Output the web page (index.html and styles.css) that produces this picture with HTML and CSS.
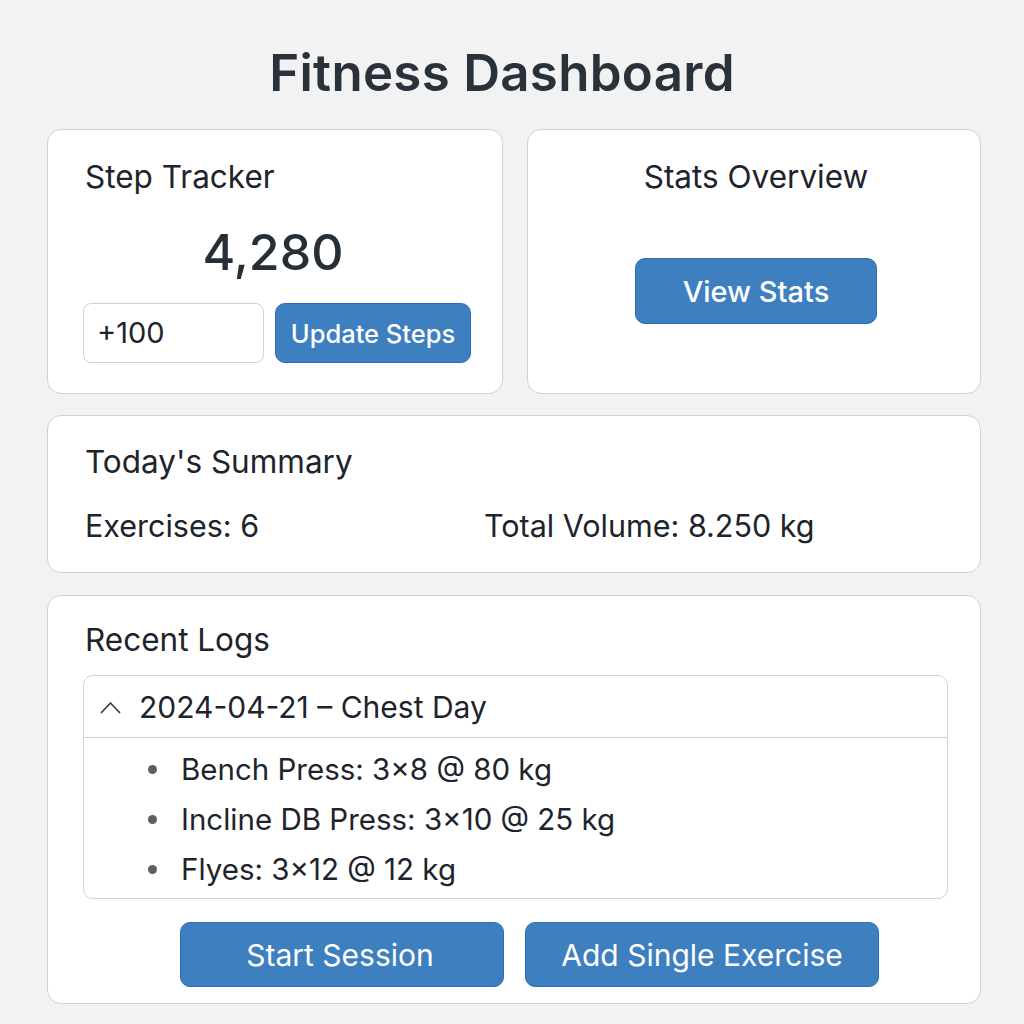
FILE: index.html
```html
<!DOCTYPE html>
<html lang="en">
<head>
<meta charset="utf-8">
<title>Fitness Dashboard</title>
<link rel="stylesheet" href="styles.css">
</head>
<body>
<main class="page">
  <h1 class="title">Fitness Dashboard</h1>
  <div class="top-row">
    <section class="card step-card">
      <h2 class="card-title">Step Tracker</h2>
      <div class="step-count">4,280</div>
      <div class="step-form">
        <div class="step-input">+100</div>
        <button class="btn btn-sm">Update Steps</button>
      </div>
    </section>
    <section class="card stats-card">
      <h2 class="card-title">Stats Overview</h2>
      <button class="btn btn-stats">View Stats</button>
    </section>
  </div>
  <section class="card summary-card">
    <h2 class="card-title">Today's Summary</h2>
    <div class="summary-grid">
      <span>Exercises: 6</span>
      <span>Total Volume: 8.250 kg</span>
    </div>
  </section>
  <section class="card logs-card">
    <h2 class="card-title">Recent Logs</h2>
    <div class="log">
      <div class="log-head">
        <svg class="chev" width="21" height="13" viewBox="0 0 21 13"><path d="M1.5 11.5 L10.5 2 L19.5 11.5" fill="none" stroke="#3d434a" stroke-width="1.8" stroke-linecap="round" stroke-linejoin="round"/></svg>
        <span>2024-04-21 – Chest Day</span>
      </div>
      <ul class="log-list">
        <li>Bench Press: 3×8 @ 80 kg</li>
        <li>Incline DB Press: 3×10 @ 25 kg</li>
        <li>Flyes: 3×12 @ 12 kg</li>
      </ul>
    </div>
    <div class="actions">
      <button class="btn btn-lg btn-start">Start Session</button>
      <button class="btn btn-lg btn-add">Add Single Exercise</button>
    </div>
  </section>
</main>
</body>
</html>
```
FILE: styles.css
```css
* { box-sizing: border-box; }
body {
  margin: 0;
  background: #f2f2f2;
  font-family: Inter, "Noto Sans", "Liberation Sans", sans-serif;
  color: #1d242c;
}
.page {
  width: 934px;
  margin-left: 47px;
  padding-top: 45px;
}
.title {
  margin: 0;
  padding-right: 24px;
  text-align: center;
  font-size: 51px;
  line-height: 56px;
  font-weight: 600;
  color: #29323b;
  letter-spacing: 0.3px;
}
.top-row {
  margin-top: 28px;
  display: grid;
  grid-template-columns: 456px 454px;
  gap: 24px;
  height: 265px;
}
.card {
  background: #fff;
  border: 1px solid #cfd2d5;
  border-radius: 14px;
}
.card-title {
  margin: 0;
  font-size: 31.5px;
  line-height: 36px;
  font-weight: 400;
  color: #1d242c;
}
.step-card {
  padding: 29px 31px 0 35px;
}
.step-card .card-title { padding-left: 2px; }
.step-count {
  margin-top: 29px;
  text-align: center;
  font-size: 50px;
  line-height: 56px;
  font-weight: 500;
  color: #262e36;
  padding-right: 8px;
}
.step-form {
  margin-top: 23px;
  display: flex;
  gap: 11px;
}
.step-input {
  width: 181px;
  height: 60px;
  border: 1px solid #cfd2d5;
  border-radius: 8px;
  font-size: 29px;
  line-height: 58px;
  padding-left: 13px;
  color: #1d242c;
}
.btn {
  font-family: inherit;
  background: #3d7fbf;
  color: #fff;
  border: 1px solid #2b6db6;
  border-radius: 10px;
  cursor: pointer;
}
.btn-sm {
  width: 196px;
  height: 60px;
  font-size: 25.5px;
  font-weight: 500;
}
.stats-card {
  padding-top: 29px;
  padding-left: 4px;
  display: flex;
  flex-direction: column;
  align-items: center;
}
.btn-stats {
  margin-top: 63px;
  width: 242px;
  height: 66px;
  font-size: 29px;
  font-weight: 500;
}
.summary-card {
  margin-top: 21px;
  height: 158px;
  padding: 28px 38px 0 37px;
}
.summary-grid {
  margin-top: 28px;
  display: grid;
  grid-template-columns: 399px 1fr;
  font-size: 30.5px;
  line-height: 36px;
}
.logs-card {
  margin-top: 22px;
  height: 409px;
  padding: 26px 32px 0 35px;
}
.logs-card .card-title { padding-left: 2px; }
.log {
  margin-top: 17px;
  border: 1px solid #cfd2d5;
  border-radius: 10px;
  height: 224px;
}
.log-head {
  height: 62px;
  border-bottom: 1px solid #cfd2d5;
  display: flex;
  align-items: center;
  gap: 18px;
  padding-left: 16px;
  font-size: 30px;
}
.chev { flex: none; margin-top: 1px; }
.log-list {
  margin: 0;
  padding: 6px 0 0 64px;
  list-style: none;
  font-size: 29.5px;
  line-height: 50px;
}
.log-list li {
  display: flex;
  align-items: center;
  gap: 24px;
}
.log-list li::before {
  content: "";
  width: 9px;
  height: 9px;
  border-radius: 50%;
  background: #5a5f66;
  flex: none;
}
.actions {
  margin-top: 23px;
  display: flex;
  gap: 21px;
  padding-left: 97px;
}
.btn-lg {
  height: 65px;
  font-size: 30px;
  font-weight: 400;
}
.btn-start { width: 324px; padding-right: 10px; }
.btn-add { width: 354px; }
```
